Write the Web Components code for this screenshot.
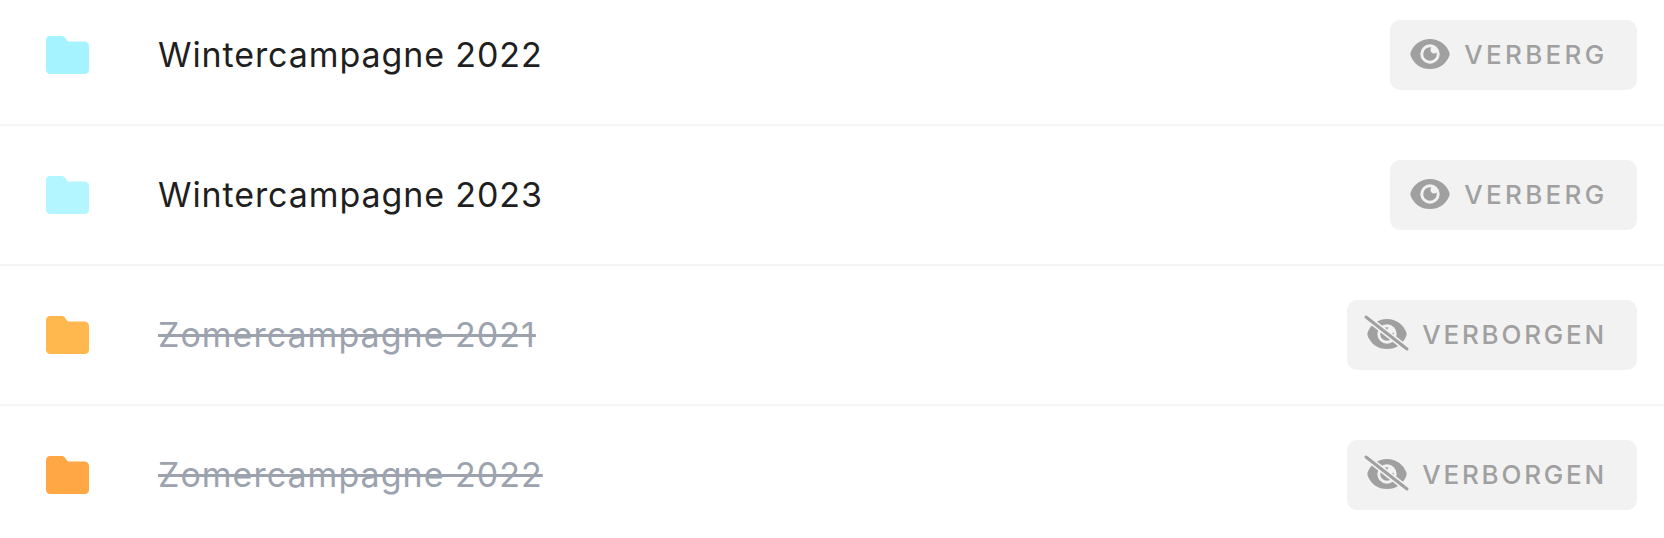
<!DOCTYPE html>
<html>
<head>
<meta charset="utf-8">
<title>Campagnes</title>
<style>
    html, body { margin: 0; padding: 0; background: #fff; }
</style>
</head>
<body>
<folder-list>
    <folder-row color="#a5f3ff" first>Wintercampagne 2022</folder-row>
    <folder-row color="#b4f6ff">Wintercampagne 2023</folder-row>
    <folder-row color="#ffb84d" hidden-row>Zomercampagne 2021</folder-row>
    <folder-row color="#ffa645" hidden-row last>Zomercampagne 2022</folder-row>
</folder-list>

<script>
class folderList extends HTMLElement{
    constructor(){
        super();
        this.shadowDOM = this.attachShadow({mode: 'open'});
        this.shadowDOM.innerHTML = `
        <style>
            :host { display: block; }
            .list { display: flex; flex-direction: column; }
        </style>
        <div class="list"><slot></slot></div>
        `;
    }
}

class folderIcon extends HTMLElement{
    constructor(){
        super();
        this.shadowDOM = this.attachShadow({mode: 'open'});
    }
    connectedCallback(){
        const color = this.getAttribute('color');
        this.shadowDOM.innerHTML = `
        <style>
            :host { display: block; width: 43px; height: 38px; }
            svg { display: block; }
        </style>
        <svg width="43" height="38" viewBox="0 0 43 38">
            <path fill="${color}" d="M4 0H15.500C17 0 18.200 .6 19 1.800L21 4.400C21.600 5.200 22.300 5.500 23.200 5.500H38.500C41 5.500 43 7.500 43 10V34C43 36.200 41.200 38 39 38H4C1.800 38 0 36.200 0 34V4C0 1.800 1.800 0 4 0Z"/>
        </svg>
        `;
    }
}

class visibilityButton extends HTMLElement{
    constructor(){
        super();
        this.shadowDOM = this.attachShadow({mode: 'open'});
    }
    connectedCallback(){
        const off = this.hasAttribute('off');
        const slash = off ? `
            <path d="M-1 1 L40 33" stroke="#f2f2f2" stroke-width="6.500" fill="none"/>
            <path d="M-1 1 L40 33" stroke="#a0a0a0" stroke-width="3" stroke-linecap="round" fill="none"/>` : '';
        this.shadowDOM.innerHTML = `
        <style>
            :host { display: block; }
            .btn {
                display: flex;
                align-items: center;
                gap: ${off ? 15 : 14}px;
                height: 70px;
                box-sizing: border-box;
                padding: 0 ${off ? 30 : 29.6}px 0 20px;
                background: #f2f2f2;
                border-radius: 10px;
                color: #a0a0a0;
                font-family: Inter, "Noto Sans", sans-serif;
                font-size: 26px;
                font-weight: 500;
                letter-spacing: ${off ? 2.8 : 3.3}px;
            }
            svg { display: block; flex: none; overflow: visible; }
            span { margin-bottom: 1px; }
        </style>
        <div class="btn">
            <svg width="40" height="36" viewBox="0 1 40 36">
                <path fill="#a0a0a0" fill-rule="evenodd" d="M.6 16.600C3.400 8.400 11 3 20 3S36.600 8.400 39.400 16.600C39.700 17.500 39.700 18.500 39.400 19.400C36.600 27.600 29 33 20 33S3.400 27.600 .6 19.400C.3 18.500 .3 17.500 .6 16.600ZM29.700 18A9.700 9.700 0 1 0 10.300 18A9.700 9.700 0 1 0 29.700 18Z"/>
                <path fill="#a0a0a0" d="M20 11.200C20.500 11.200 21 11.250 21.400 11.350C20.800 12.100 20.500 13 20.500 14C20.500 16 22 17.500 24 17.500C25 17.500 25.900 17.200 26.650 16.600C26.750 17.050 26.800 17.500 26.800 18A6.800 6.800 0 1 1 20 11.200Z"/>
                ${slash}
            </svg>
            <span><slot></slot></span>
        </div>
        `;
    }
}

class folderRow extends HTMLElement{
    constructor(){
        super();
        this.shadowDOM = this.attachShadow({mode: 'open'});
    }
    connectedCallback(){
        const color = this.getAttribute('color');
        const off = this.hasAttribute('hidden-row');
        const first = this.hasAttribute('first');
        const last = this.hasAttribute('last');
        this.shadowDOM.innerHTML = `
        <style>
            :host { display: block; }
            .row {
                display: flex;
                align-items: center;
                box-sizing: border-box;
                padding: ${first ? 20 : 34}px 27px ${last ? 28 : 34}px 46px;
                border-bottom: ${last ? 0 : 2}px solid #f3f4f6;
            }
            .name {
                flex: 1;
                margin: 0 0 2px 69px;
                font-family: Inter, "Noto Sans", sans-serif;
                font-size: 34px;
                letter-spacing: ${off ? 1.02 : .9}px;
                color: ${off ? '#9ca3af' : '#1f1f1f'};
                text-decoration: ${off ? 'line-through' : 'none'};
            }
        </style>
        <div class="row">
            <folder-icon color="${color}"></folder-icon>
            <div class="name"><slot></slot></div>
            <visibility-button ${off ? 'off' : ''}>${off ? 'VERBORGEN' : 'VERBERG'}</visibility-button>
        </div>
        `;
    }
}

customElements.define('folder-list', folderList);
customElements.define('folder-icon', folderIcon);
customElements.define('visibility-button', visibilityButton);
customElements.define('folder-row', folderRow);
</script>
</body>
</html>
